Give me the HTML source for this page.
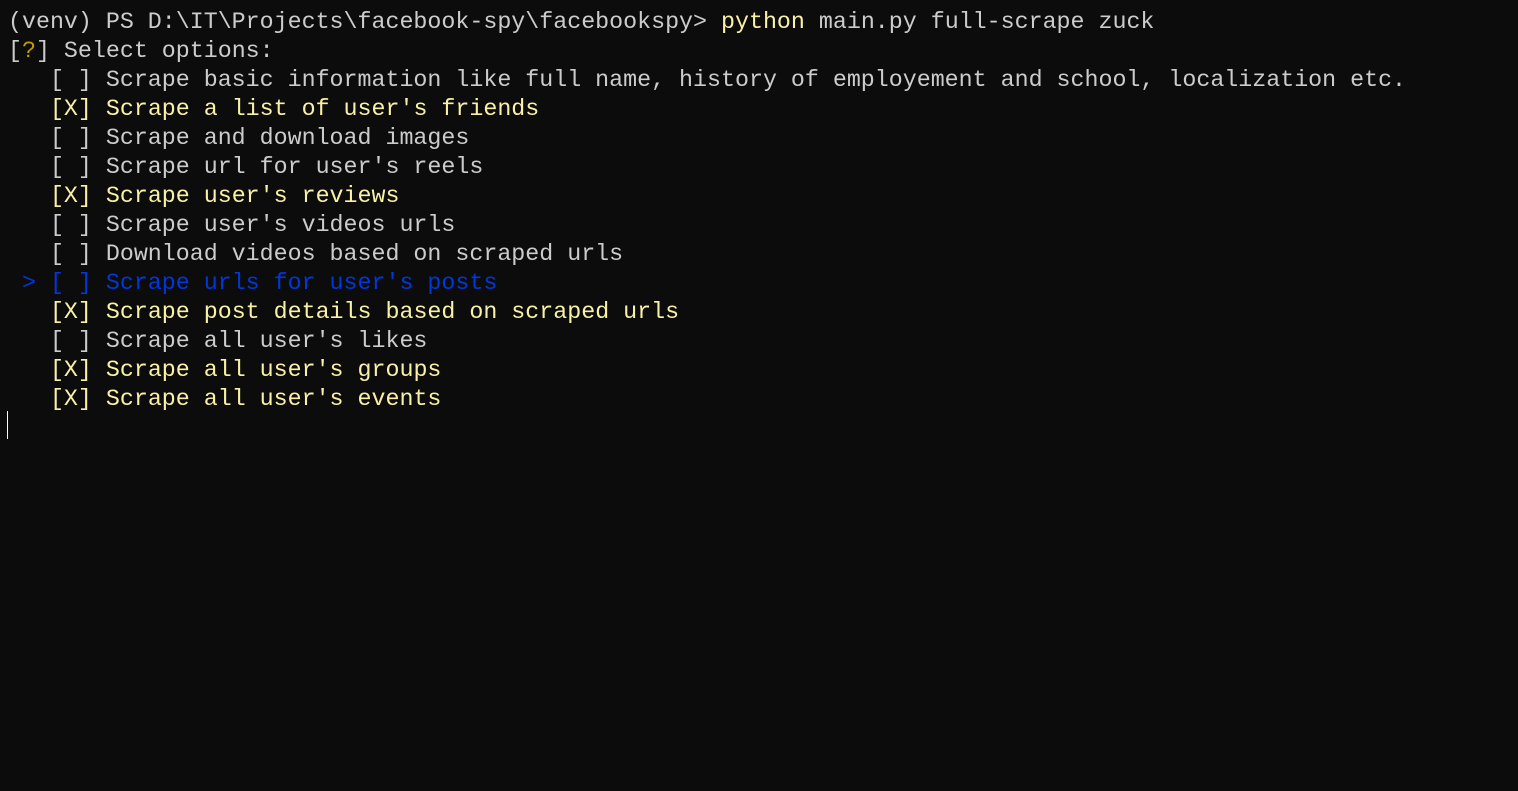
<!DOCTYPE html>
<html><head><meta charset="utf-8"><style>
html,body{margin:0;padding:0;background:#0c0c0c;width:1518px;height:791px;overflow:hidden}
pre{margin:0;position:absolute;left:8px;top:8px;font-family:"Liberation Mono","DejaVu Sans Mono",monospace;font-size:23.3px;line-height:29px;color:#cccccc;white-space:pre}
.y{color:#f9f1a5}.q{color:#c19c00}.b{color:#0037da}
.cur{position:absolute;left:7px;top:411px;width:1px;height:28px;background:#ffffff}
</style></head><body>
<pre>(venv) PS D:\IT\Projects\facebook-spy\facebookspy&gt; <span class="y">python</span> main.py full-scrape zuck
[<span class="q">?</span>] Select options:
   [ ] Scrape basic information like full name, history of employement and school, localization etc.
   <span class="y">[X] Scrape a list of user's friends</span>
   [ ] Scrape and download images
   [ ] Scrape url for user's reels
   <span class="y">[X] Scrape user's reviews</span>
   [ ] Scrape user's videos urls
   [ ] Download videos based on scraped urls
 <span class="b">&gt; [ ] Scrape urls for user's posts</span>
   <span class="y">[X] Scrape post details based on scraped urls</span>
   [ ] Scrape all user's likes
   <span class="y">[X] Scrape all user's groups</span>
   <span class="y">[X] Scrape all user's events</span></pre>
<div class="cur"></div>
</body></html>
